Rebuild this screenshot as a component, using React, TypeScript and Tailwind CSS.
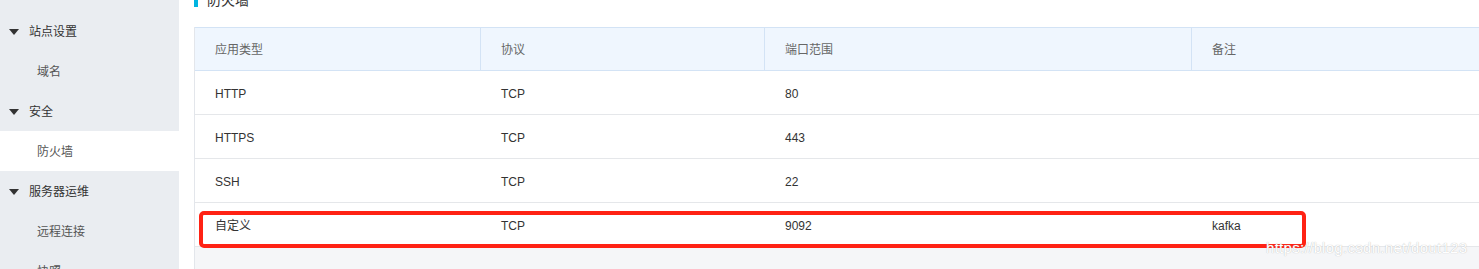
import React from 'react';

const font = { fontFamily: '"Liberation Sans", "Noto Sans CJK SC", sans-serif' };

type NavItem = { label: string; group?: boolean; active?: boolean };

const nav: NavItem[] = [
  { label: '', group: false },
  { label: '站点设置', group: true },
  { label: '域名' },
  { label: '安全', group: true },
  { label: '防火墙', active: true },
  { label: '服务器运维', group: true },
  { label: '远程连接' },
  { label: '快照' },
];

const rows = [
  ['HTTP', 'TCP', '80', ''],
  ['HTTPS', 'TCP', '443', ''],
  ['SSH', 'TCP', '22', ''],
  ['自定义', 'TCP', '9092', 'kafka'],
];

const colW = ['w-[286px]', 'w-[284px]', 'w-[427px]', 'flex-1'];

const Caret = () => (
  <svg width="10" height="6" viewBox="0 0 10 6" className="shrink-0">
    <path d="M0 0 L10 0 L5 6 Z" fill="#333" />
  </svg>
);

const Sidebar = () => (
  <div className="w-[179px] shrink-0 bg-[#eaedf1] h-[269px] overflow-hidden">
    <div className="-mt-[29px]">
      {nav.map((item, i) => (
        <div
          key={i}
          className={`h-10 flex items-center pt-[2px] text-[12px] ${item.active ? 'bg-white' : ''}`}
        >
          {item.group ? (
            <div className="flex items-center pl-[9px] gap-[10px] text-[#333]">
              <Caret />
              <span>{item.label}</span>
            </div>
          ) : (
            <span className="pl-[37px] text-[#555]">{item.label}</span>
          )}
        </div>
      ))}
    </div>
  </div>
);

export default function App() {
  return (
    <div className="flex w-[1479px] h-[269px] overflow-hidden bg-white" style={font}>
      <Sidebar />
      <div className="flex-1 flex flex-col pl-[15px] min-w-0">
        <div className="h-[27px] relative">
          <div className="flex items-center gap-[9px] -mt-[7px] h-[14px]">
            <div className="w-[4px] h-[14px] bg-[#00b4e0]" />
            <span className="text-[14px] text-[#333] leading-none">防火墙</span>
          </div>
        </div>
        <div className="relative flex-1 border-l border-[#e3e6eb] bg-[#f5f6f8] w-[1320px]">
          <div className="flex h-[44px] bg-[#eff6fe] border-y border-[#d3e3f5] text-[12px] text-[#666]">
            {['应用类型', '协议', '端口范围', '备注'].map((h, i) => (
              <div
                key={h}
                className={`${colW[i]} flex items-center pl-[20px] pt-[2px] ${i < 3 ? 'border-r border-[#d3e3f5]' : ''}`}
              >
                {h}
              </div>
            ))}
          </div>
          {rows.map((r, ri) => (
            <div key={ri} className="flex h-[44px] bg-white border-b border-[#e5e7ea] text-[12px] text-[#333]">
              {r.map((c, ci) => (
                <div key={ci} className={`${colW[ci]} flex items-center pl-[20px] pt-[2px]`}>
                  {c}
                </div>
              ))}
            </div>
          ))}
          <div className="absolute left-[4px] top-[184px] w-[1107px] h-[37px] border-[4px] border-[#ff2214] rounded-[5px]" />
          <div className="absolute left-[1071px] top-[213px] text-[15px] text-white leading-none tracking-[0.3px] [text-shadow:0_0_1px_#aaa]">
            https://blog.csdn.net/dout123
          </div>
        </div>
      </div>
    </div>
  );
}
